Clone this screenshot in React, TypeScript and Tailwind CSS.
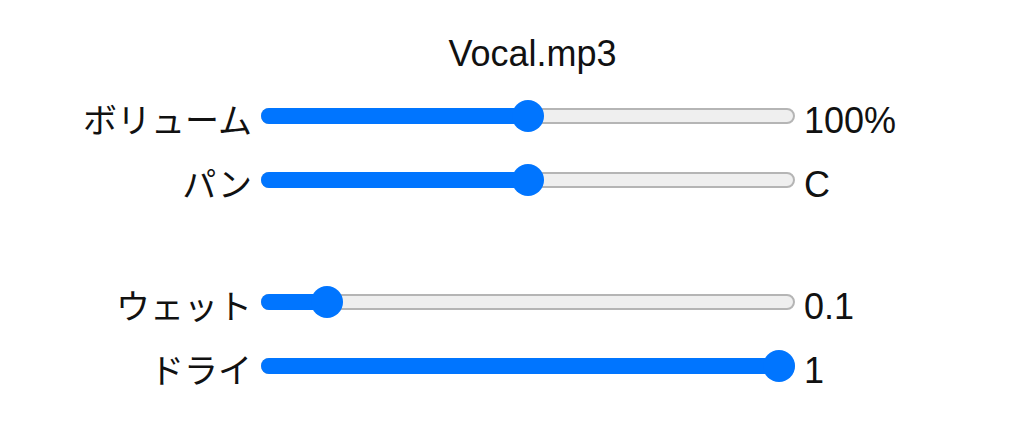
const rows = [
  { label: "ボリューム", value: 0.5, text: "100%" },
  { label: "パン", value: 0.5, text: "C" },
];

const sends = [
  { label: "ウェット", value: 0.1, text: "0.1" },
  { label: "ドライ", value: 1, text: "1" },
];

const TRACK_W = 534;
const THUMB = 32;

function Slider({ value }: { value: number }) {
  const left = value * (TRACK_W - THUMB);
  return (
    <div className="relative flex h-[32px] w-[534px] items-center">
      <div className="h-[16px] w-full rounded-full border-2 border-[#b5b5b5] bg-[#efefef]" />
      <div
        className="absolute left-0 h-[16px] rounded-full bg-[#0075ff]"
        style={{ width: left + THUMB / 2 }}
      />
      <div
        className="absolute top-0 h-[32px] w-[32px] rounded-full bg-[#0075ff]"
        style={{ left }}
      />
    </div>
  );
}

function Row({ label, value, text }: { label: string; value: number; text: string }) {
  return (
    <div className="grid h-[64px] grid-cols-[252px_552px_1fr] items-center">
      <div className="pt-[10px] text-right text-[34px] leading-none">{label}</div>
      <div className="pl-[9px]">
        <Slider value={value} />
      </div>
      <div className="pt-[10px] text-[36px] leading-none">{text}</div>
    </div>
  );
}

export default function App() {
  return (
    <main
      className="h-[448px] w-[1024px] overflow-hidden bg-white pt-[24px] text-[#111]"
      style={{ fontFamily: '"Liberation Sans", "Noto Sans CJK JP", sans-serif' }}
    >
      <div className="grid h-[60px] grid-cols-[252px_552px_1fr] items-center">
        <div />
        <div className="pl-[9px] text-center text-[36px] leading-none">Vocal.mp3</div>
      </div>
      {rows.map((r) => (
        <Row key={r.label} {...r} />
      ))}
      <div className="h-[58px]" />
      {sends.map((r) => (
        <Row key={r.label} {...r} />
      ))}
    </main>
  );
}
